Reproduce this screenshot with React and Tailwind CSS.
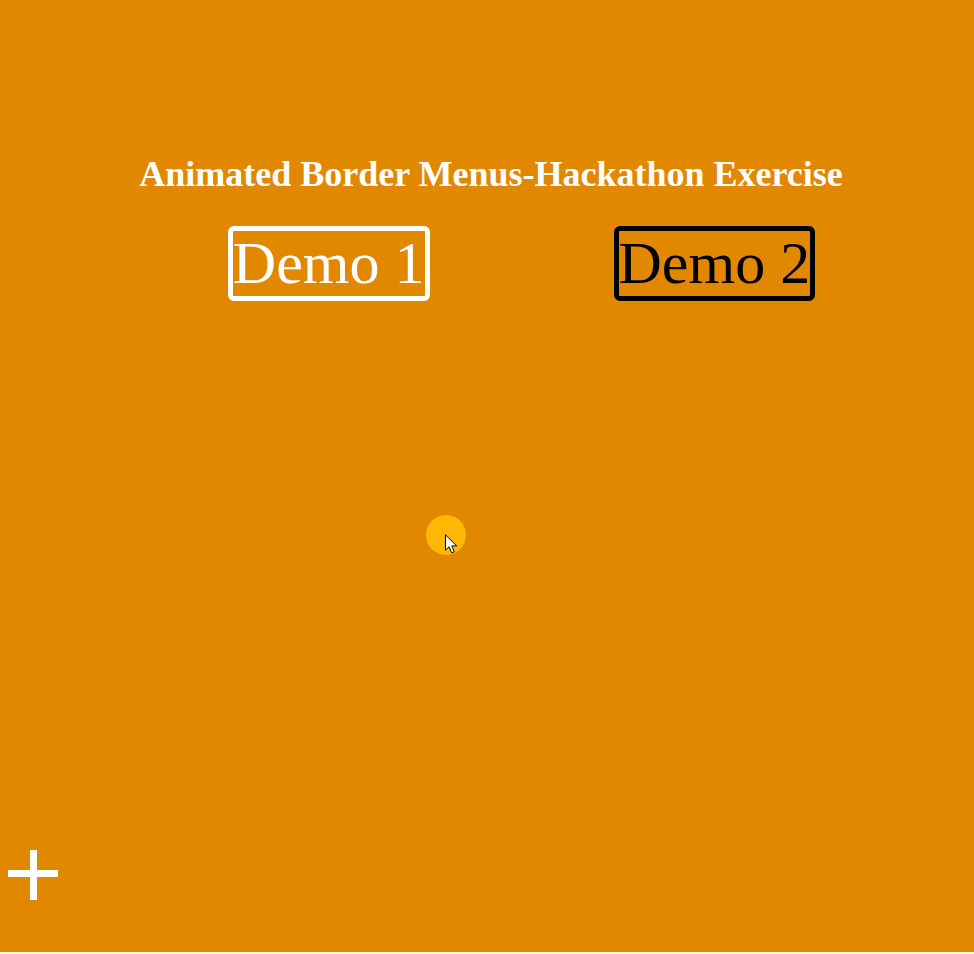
function DemoLink({ href, tone, children }) {
  return (
    <a
      href={href}
      className={`rounded-md border-[5px] text-[60px] leading-[65px] ${tone}`}
    >
      {children}
    </a>
  );
}

function Cursor() {
  return (
    <div
      aria-hidden="true"
      className="pointer-events-none absolute top-[515px] left-[426px] size-10 rounded-full bg-[#fdb806]"
    >
      <svg
        className="absolute top-[19px] left-[19px]"
        width="13"
        height="20"
        viewBox="0 0 13 20"
      >
        <path
          d="M.5.8v15.4l3.6-3.4 2.5 6 2.7-1.1-2.5-5.8h4.9z"
          fill="#fff"
          stroke="#000"
          strokeWidth="1"
        />
      </svg>
    </div>
  );
}

export default function App() {
  return (
    <main className="relative flex min-h-screen flex-col border-b-2 border-[#fff8e0] bg-[#e18700] font-['Liberation_Serif','Times_New_Roman',serif]">
      <h1 className="pt-[154px] pl-2 text-center text-[36px] leading-[40px] font-bold text-white">
        Animated Border Menus-Hackathon Exercise
      </h1>

      <nav
        aria-label="Demos"
        className="mt-8 flex flex-wrap justify-center gap-x-[184px] gap-y-6 pl-[69px]"
      >
        <DemoLink href="#demo-1" tone="border-white text-white">
          Demo 1
        </DemoLink>
        <DemoLink href="#demo-2" tone="border-black text-black">
          Demo 2
        </DemoLink>
      </nav>

      <button
        type="button"
        aria-label="Open menu"
        className="mt-auto mb-[52px] ml-2 size-[50px] cursor-pointer text-white"
      >
        <svg width="50" height="50" viewBox="0 0 50 50" fill="currentColor">
          <path d="M22 0h7v20h21v7H29v23h-7V27H0v-7h22z" />
        </svg>
      </button>

      <Cursor />
    </main>
  );
}
